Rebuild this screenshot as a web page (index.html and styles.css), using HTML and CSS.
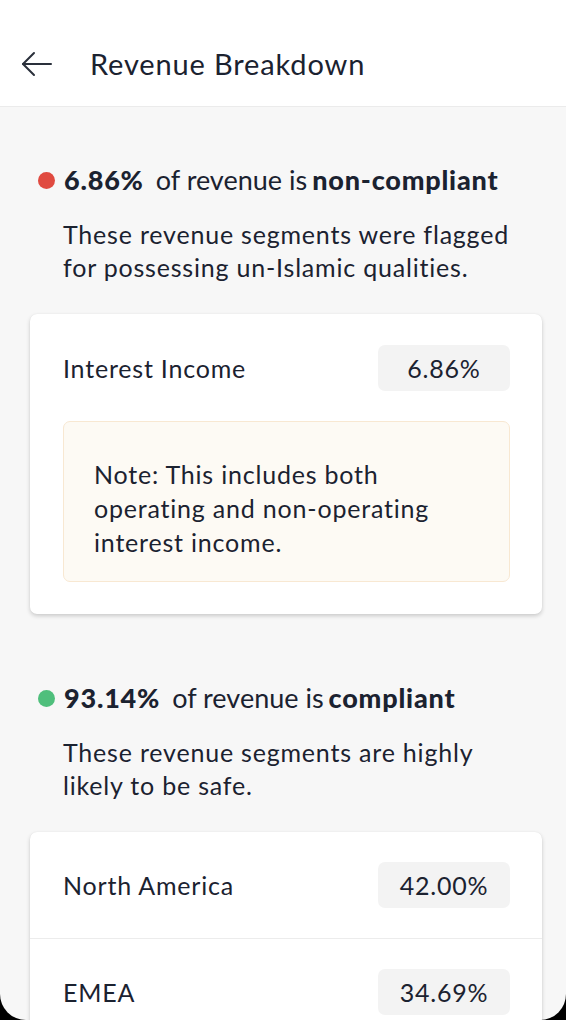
FILE: index.html
```html
<!DOCTYPE html>
<html lang="en">
<head>
<meta charset="utf-8">
<title>Revenue Breakdown</title>
<link rel="stylesheet" href="styles.css">
</head>
<body>
<div class="screen">
  <header class="topbar">
    <button class="back" aria-label="Back">
      <svg width="32" height="26" viewBox="0 0 32 26" fill="none" stroke="#2a303b" stroke-width="2" stroke-linecap="round" stroke-linejoin="round">
        <path d="M30 13H2"/>
        <path d="M13 2L2 13l11 11"/>
      </svg>
    </button>
    <h1 class="title">Revenue Breakdown</h1>
  </header>

  <main class="content">
    <section class="group">
      <div class="headline">
        <span class="dot dot-red"></span>
        <strong class="pct">6.86%</strong>
        <span class="mid">of revenue is</span>
        <strong class="status">non-compliant</strong>
      </div>
      <p class="desc">These revenue segments were flagged for possessing un-Islamic qualities.</p>
      <div class="card">
        <div class="row">
          <span class="label">Interest Income</span>
          <span class="pill">6.86%</span>
        </div>
        <div class="note">Note: This includes both operating and non-operating interest income.</div>
      </div>
    </section>

    <section class="group">
      <div class="headline">
        <span class="dot dot-green"></span>
        <strong class="pct">93.14%</strong>
        <span class="mid">of revenue is</span>
        <strong class="status">compliant</strong>
      </div>
      <p class="desc">These revenue segments are highly likely to be safe.</p>
      <div class="card card-list">
        <div class="row row-divided">
          <span class="label">North America</span>
          <span class="pill">42.00%</span>
        </div>
        <div class="row row-divided">
          <span class="label">EMEA</span>
          <span class="pill">34.69%</span>
        </div>
      </div>
    </section>
  </main>
</div>
</body>
</html>
```

FILE: styles.css
```css
* { box-sizing: border-box; }

html, body {
  margin: 0;
  padding: 0;
  background: #000;
}

body {
  font-family: Lato, "Noto Sans", "Liberation Sans", sans-serif;
  color: #1b2230;
}

.screen {
  width: 566px;
  height: 1020px;
  overflow: hidden;
  background: #f7f7f7;
  border-bottom-left-radius: 26px;
  border-bottom-right-radius: 26px;
}

.topbar {
  height: 107px;
  background: #fff;
  border-bottom: 1px solid #ebebeb;
  display: flex;
  align-items: center;
  padding-left: 21px;
  padding-top: 21px;
}

.back {
  border: 0;
  background: none;
  padding: 0;
  width: 32px;
  height: 26px;
  display: flex;
}

.title {
  margin: 0 0 0 37px;
  font-size: 29px;
  font-weight: 400;
  letter-spacing: 0.85px;
  color: #1b2230;
}

.content {
  padding: 56px 24px 0 30px;
}

.group {
  margin-bottom: 67px;
}

.headline {
  display: flex;
  align-items: center;
  padding-left: 8px;
  font-size: 27px;
  line-height: 34px;
}

.dot {
  width: 17px;
  height: 17px;
  border-radius: 50%;
  flex: none;
  margin-right: 9px;
}

.dot-red { background: #e04a40; }
.dot-green { background: #4fbf7c; }

.pct {
  font-weight: 900;
  letter-spacing: 0.8px;
  margin-right: 12px;
}

.mid {
  font-weight: 400;
  margin-right: 5px;
}

.status {
  font-weight: 900;
  letter-spacing: 0.8px;
}

.desc {
  margin: 21px 0 30px 33px;
  font-size: 25px;
  letter-spacing: 0.8px;
  line-height: 33px;
  max-width: 450px;
}

.card {
  width: 512px;
  background: #fff;
  border-radius: 7px;
  box-shadow: 0 2px 4px rgba(0, 0, 0, 0.18), 0 0 1px rgba(0, 0, 0, 0.08);
  padding: 31px 32px 32px 33px;
}

.card-list {
  padding: 0 32px 0 33px;
}

.row {
  display: flex;
  align-items: center;
  justify-content: space-between;
}

.row-divided {
  height: 107px;
  border-bottom: 1px solid #ececec;
  margin: 0 -32px 0 -33px;
  padding: 0 32px 0 33px;
}

.label {
  font-size: 25px;
  letter-spacing: 0.8px;
}

.pill {
  width: 132px;
  height: 46px;
  background: #f3f3f3;
  border-radius: 7px;
  display: flex;
  align-items: center;
  justify-content: center;
  font-size: 25px;
  letter-spacing: 0.8px;
}

.note {
  margin-top: 30px;
  background: #fdfaf4;
  border: 1px solid #f8e8d2;
  border-radius: 7px;
  padding: 35px 55px 22px 30px;
  font-size: 25px;
  letter-spacing: 0.8px;
  line-height: 34px;
}
```
